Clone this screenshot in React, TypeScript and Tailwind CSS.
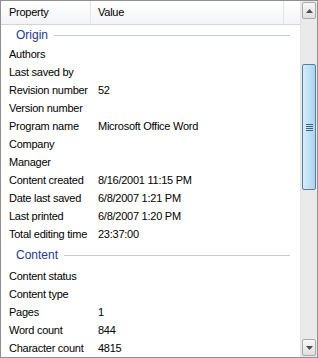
import React from 'react';

type Row = [string, string];

const origin: Row[] = [
  ['Authors', ''],
  ['Last saved by', ''],
  ['Revision number', '52'],
  ['Version number', ''],
  ['Program name', 'Microsoft Office Word'],
  ['Company', ''],
  ['Manager', ''],
  ['Content created', '8/16/2001 11:15 PM'],
  ['Date last saved', '6/8/2007 1:21 PM'],
  ['Last printed', '6/8/2007 1:20 PM'],
  ['Total editing time', '23:37:00'],
];

const content: Row[] = [
  ['Content status', ''],
  ['Content type', ''],
  ['Pages', '1'],
  ['Word count', '844'],
  ['Character count', '4815'],
];

function Group({ title, className }: { title: string; className: string }) {
  return (
    <div className={`flex items-center pl-[15px] pr-[10px] ${className}`}>
      <span className="text-[#1e3a8a] text-[12px] mr-[6px]">{title}</span>
      <div className="flex-1 h-px bg-[#c5cbd6]" />
    </div>
  );
}

function PropRow({ row }: { row: Row }) {
  return (
    <div className="flex items-center h-[18px] text-[#000] text-[11px] tracking-[-0.25px]">
      <div className="w-[90px] pl-[8px] shrink-0 whitespace-nowrap">{row[0]}</div>
      <div className="pl-[7px] whitespace-nowrap">{row[1]}</div>
    </div>
  );
}

export default function App() {
  return (
    <div
      className="w-[318px] h-[358px] border border-[#8e8f8f] bg-white flex overflow-hidden"
      style={{ fontFamily: '"Liberation Sans", Arial, sans-serif' }}
    >
      <div className="flex-1 flex flex-col overflow-hidden">
        <div className="flex h-[24px] shrink-0 border-b border-[#d5d5d5] bg-gradient-to-b from-white to-[#f3f4f6] text-[11px] tracking-[-0.25px] text-[#000]">
          <div className="w-[90px] pl-[8px] flex items-center border-r border-[#e3e4e6]">Property</div>
          <div className="w-[193px] pl-[7px] flex items-center border-r border-[#e3e4e6]">Value</div>
          <div className="flex-1" />
        </div>
        <Group title="Origin" className="h-[20px]" />
        {origin.map((r) => (
          <PropRow key={r[0]} row={r} />
        ))}
        <Group title="Content" className="h-[24px]" />
        {content.map((r) => (
          <PropRow key={r[0]} row={r} />
        ))}
      </div>
      <div className="w-[17px] shrink-0 flex flex-col bg-[#eaeaea] border-l border-[#e4e4e4]">
        <div className="h-[17px] mx-[1px] mt-[1px] border border-[#a9a9a9] rounded-[2px] bg-gradient-to-b from-[#f7f7f7] to-[#e0e0e0] flex items-center justify-center">
          <svg width="7" height="4" viewBox="0 0 7 4"><path d="M0 4 L3.5 0 L7 4 Z" fill="#4d4d4d" /></svg>
        </div>
        <div className="h-[45px]" />
        <div className="h-[126px] mx-[1px] border border-[#5a7ea1] rounded-[2px] bg-gradient-to-r from-[#d7ecf8] via-[#bfe1f4] to-[#a9d3ee] flex items-center justify-center">
          <div className="flex flex-col gap-[1px]">
            <div className="w-[7px] h-px bg-[#3f6386]" />
            <div className="w-[7px] h-px bg-[#3f6386]" />
            <div className="w-[7px] h-px bg-[#3f6386]" />
            <div className="w-[7px] h-px bg-[#3f6386]" />
          </div>
        </div>
        <div className="flex-1" />
        <div className="h-[17px] mx-[1px] mb-[1px] border border-[#a9a9a9] rounded-[2px] bg-gradient-to-b from-[#f7f7f7] to-[#e0e0e0] flex items-center justify-center">
          <svg width="7" height="4" viewBox="0 0 7 4"><path d="M0 0 L3.5 4 L7 0 Z" fill="#4d4d4d" /></svg>
        </div>
      </div>
    </div>
  );
}
